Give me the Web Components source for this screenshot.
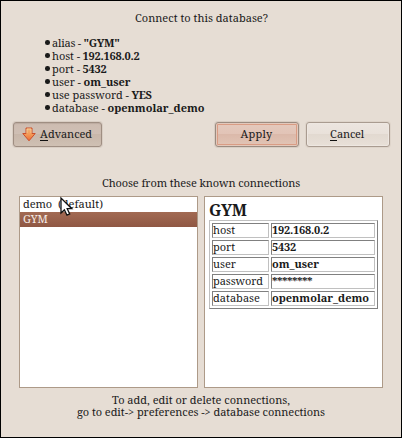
<!DOCTYPE html>
<html lang="en"><head><meta charset="utf-8"><title>Connect</title>
<style>
html,body{margin:0;padding:0}
body{width:402px;height:438px;overflow:hidden;font:11px/13px "Droid Serif","Noto Serif","DejaVu Serif Condensed","DejaVu Serif",serif;font-stretch:condensed;color:#1a1a1a}
</style></head><body>
<connect-dialog></connect-dialog>
<script>
const define=(name,html,setup)=>customElements.define(name,class extends HTMLElement{
  connectedCallback(){
    if(this.shadowRoot)return;
    this.attachShadow({mode:'open'}).innerHTML=html;
    if(setup)setup.call(this,this.shadowRoot);
  }
});

/* A single line of text whose tracking is adjusted to a given width. */
define('fit-text','<style>:host{display:inline-block;white-space:pre;vertical-align:top}span{display:inline-block}</style><span><slot></slot></span>',function(root){
  const w=+this.getAttribute('w'),s=root.querySelector('span'),n=this.textContent.length;
  this.style.width=w+'px';
  const natural=s.getBoundingClientRect().width;
  s.style.letterSpacing=((w-natural)/n).toFixed(3)+'px';
});

define('setting-item',`<style>
:host{display:flex;height:13px;align-items:center}
i{width:4.6px;height:4.6px;border-radius:50%;background:#1a1a1a;margin-right:2.4px;flex:none}
b{margin-left:2.5px}</style><i></i><slot name="key"></slot><b><slot></slot></b>`);

define('push-button',`<style>
:host{display:flex;box-sizing:border-box;width:84px;height:25px;border:1px solid #a99b90;border-radius:3px;align-items:center;justify-content:center;padding:0 2px 2px 0;
background:linear-gradient(#ece5df,#e9e1da 47%,#e2d9d0 50%,#e8e0d8);box-shadow:0 0 0 1px #ded4ca,inset 0 0 0 1px #eee7e1}
:host([kind=primary]){padding-right:1px;background:linear-gradient(#e4c9bd,#e2c4b7 47%,#dbb9aa 50%,#e2c5b6);border-color:#9b8b80;box-shadow:0 0 0 1px #d8cdc3,inset 0 0 0 1px #e3c9bc,inset 0 0 0 2px #d99c84}
:host([kind=pressed]){width:89px;background:linear-gradient(#cdbcb1,#cfbfb4 47%,#c8b7aa 50%,#cfc0b3);border-color:#9f8e82;box-shadow:0 0 0 1px #d9cec4,inset 0 1px 1px #bcaaa0;justify-content:flex-start;padding-left:8px}
</style><slot></slot>`);

define('accel-key','<style>:host{display:block;height:13px;box-shadow:0 1px #111}</style><slot></slot>');

define('arrow-icon',`<style>:host{display:block;width:14px;height:15px;margin:2px 4px 0 0}svg{display:block}</style>
<svg width="14" height="15" viewBox="0 0 14 15"><defs><linearGradient id="g" x2="0" y2="1"><stop stop-color="#efb577"/><stop offset=".5" stop-color="#f39a58"/><stop offset="1" stop-color="#ed6c35"/></linearGradient></defs>
<path d="M4 1H10V6.5H13.2L7 13.8L.8 6.5H4Z" fill="url(#g)" stroke="#cc4f2b" stroke-linejoin="round"/><path d="M5 6V2H9V6" fill="none" stroke="#f8cf9f" stroke-width=".8"/></svg>`);

define('list-row',`<style>:host{display:flex;height:15px;padding-left:3px;line-height:13px;box-sizing:border-box}
:host([selected]){background:linear-gradient(#a26a53,#8f5743);color:#f7eee9}</style><slot></slot>`);

define('list-panel','<style>:host{display:block;box-sizing:border-box;width:179px;height:192px;border:1px solid #ad9a88;background:#fff}</style><slot></slot>');

define('detail-row',`<style>
:host{display:grid;grid-template-columns:57px 104px;column-gap:2px;height:15px}
div{box-sizing:border-box;border:1px solid;border-color:#808080 #c0c0c0 #c0c0c0 #808080;line-height:11px;height:15px}
b{display:block}</style><div><slot name="key"></slot></div><div><b><slot></slot></b></div>`);

define('detail-table',`<style>:host{display:grid;box-sizing:border-box;width:169px;height:89px;row-gap:2px;border:1px solid;border-color:#c0c0c0 #808080 #808080 #c0c0c0;padding:2px}</style><slot></slot>`);

define('mouse-pointer',`<style>:host{position:absolute;left:58px;top:195px;width:15px;height:22px}svg{display:block}</style>
<svg width="15" height="22" viewBox="0 0 15 22"><path d="M2 2V17L5.4 13.9L8 19.2L10.7 17.9L8.2 12.7H12.8Z" fill="#fff" stroke="#111" stroke-width="1.3"/></svg>`);

define('connect-dialog',`<style>
:host{display:flex;flex-direction:column;box-sizing:border-box;width:402px;height:438px;background:#e6ddd4;border:1px solid #000;position:relative}
header{padding:10px 0 0 134px;height:13px}
.settings{padding:12px 0 0 44px}
.buttons{display:flex;padding:8px 0 0 12px;height:25px}
.buttons push-button:nth-child(2){margin-left:113px}.buttons push-button:nth-child(3){margin-left:7px}
.caption{padding:29px 0 0 101px;height:13px}
.panels{display:flex;gap:6px;padding:7px 0 0 18px}
.title{font-size:16px;line-height:20px;font-weight:bold;padding:3px 0 0 4px;height:20px}
detail-table{margin-left:4px}
footer{padding-top:6px;line-height:12px}
footer div{height:12px}
.first{padding-left:111px}.second{padding-left:76px}
</style>
<header><fit-text w="133">Connect to this database?</fit-text></header>
<div class="settings">
<setting-item><fit-text slot="key" w="29">alias -</fit-text><fit-text w="36">"GYM"</fit-text></setting-item>
<setting-item><fit-text slot="key" w="28">host -</fit-text><fit-text w="57">192.168.0.2</fit-text></setting-item>
<setting-item><fit-text slot="key" w="28">port -</fit-text><fit-text w="24">5432</fit-text></setting-item>
<setting-item><fit-text slot="key" w="29">user -</fit-text><fit-text w="47">om_user</fit-text></setting-item>
<setting-item><fit-text slot="key" w="77">use password -</fit-text><fit-text w="20">YES</fit-text></setting-item>
<setting-item><fit-text slot="key" w="53">database -</fit-text><fit-text w="97">openmolar_demo</fit-text></setting-item>
</div>
<div class="buttons">
<push-button kind="pressed"><arrow-icon></arrow-icon><accel-key><fit-text w="8">A</fit-text></accel-key><fit-text w="44">dvanced</fit-text></push-button>
<push-button kind="primary"><fit-text w="32">Apply</fit-text></push-button>
<push-button><accel-key><fit-text w="7">C</fit-text></accel-key><fit-text w="27">ancel</fit-text></push-button>
</div>
<div class="caption"><fit-text w="198">Choose from these known connections</fit-text></div>
<div class="panels">
<list-panel><list-row><fit-text w="29">demo</fit-text><fit-text w="45" style="margin-left:6px">(default)</fit-text></list-row><list-row selected><fit-text w="25">GYM</fit-text></list-row></list-panel>
<list-panel><div class="title"><fit-text w="38">GYM</fit-text></div>
<detail-table>
<detail-row><fit-text slot="key" w="22">host</fit-text><fit-text w="57">192.168.0.2</fit-text></detail-row>
<detail-row><fit-text slot="key" w="22">port</fit-text><fit-text w="24">5432</fit-text></detail-row>
<detail-row><fit-text slot="key" w="23">user</fit-text><fit-text w="47">om_user</fit-text></detail-row>
<detail-row><fit-text slot="key" w="50">password</fit-text><fit-text w="40">********</fit-text></detail-row>
<detail-row><fit-text slot="key" w="47">database</fit-text><fit-text w="97">openmolar_demo</fit-text></detail-row>
</detail-table></list-panel>
</div>
<footer><div class="first"><fit-text w="178">To add, edit or delete connections,</fit-text></div><div class="second"><fit-text w="248">go to edit-&gt; preferences -&gt; database connections</fit-text></div></footer>
<mouse-pointer></mouse-pointer>`);
</script>
</body></html>
